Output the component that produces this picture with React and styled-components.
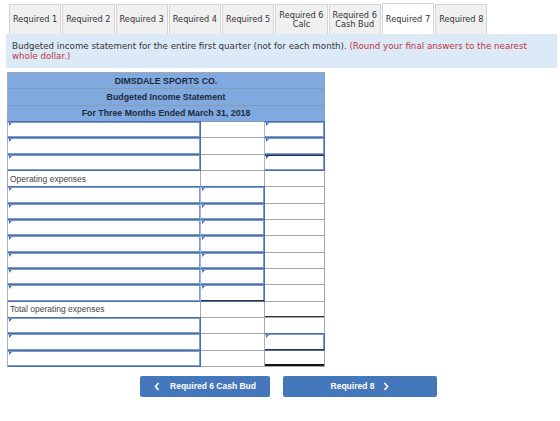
import React from "react";
import styled, { createGlobalStyle } from "styled-components";

const tabs = [
  ["Required 1"],
  ["Required 2"],
  ["Required 3"],
  ["Required 4"],
  ["Required 5"],
  ["Required 6", "Calc"],
  ["Required 6", "Cash Bud"],
  ["Required 7"],
  ["Required 8"],
];
const ACTIVE_TAB = 7;

// each row: [col1, col2, col3]; a cell is "in" (entry box), "" (blank) or a label
const rows = [
  { cells: ["in", "", "in"] },
  { cells: ["in", "", "in"] },
  { cells: ["in", "", "in"], rules: [null, null, "top"] },
  { cells: ["Operating expenses", "", ""] },
  { cells: ["in", "in", ""] },
  { cells: ["in", "in", ""] },
  { cells: ["in", "in", ""] },
  { cells: ["in", "in", ""] },
  { cells: ["in", "in", ""] },
  { cells: ["in", "in", ""] },
  { cells: ["in", "in", ""], rules: [null, "bottom", null] },
  { cells: ["Total operating expenses", "", ""], rules: [null, null, "bottom"] },
  { cells: ["in", "", ""] },
  { cells: ["in", "", "in"], rules: [null, null, "bottom"] },
  { cells: ["in", "", ""], rules: [null, null, "double"] },
];

const GlobalStyle = createGlobalStyle`
  body {
    margin: 0;
    background: #fff;
    font-family: "DejaVu Sans", Verdana, sans-serif;
  }
`;

const Page = styled.div`
  width: 560px;
  height: 421px;
  padding: 3px 3px 0 6px;
  box-sizing: border-box;
`;

const TabBar = styled.div`
  display: flex;
  align-items: flex-end;
  height: 31px;
  padding-left: 3px;
`;

const Tab = styled.div`
  display: flex;
  flex-direction: column;
  justify-content: center;
  align-items: center;
  box-sizing: border-box;
  height: ${p => (p.active ? "31px" : "30px")};
  padding: 0 3px;
  margin-right: 1px;
  background: ${p => (p.active ? "#fff" : "#f0f0f0")};
  border: 1px solid #d4d4d4;
  border-bottom: none;
  color: #333;
  font-size: 8.2px;
  line-height: 9px;
  white-space: nowrap;
  text-align: center;
`;

const Notice = styled.p`
  margin: 0;
  background: #dceaf8;
  padding: 7px 6px 5px;
  height: 34px;
  box-sizing: border-box;
  font-size: 8.7px;
  line-height: 10px;
  color: #333;
`;

const Hint = styled.span`
  color: #c0343c;
`;

const Sheet = styled.div`
  display: grid;
  grid-template-columns: 193px 64px 60px;
  grid-auto-rows: 16.33px;
  width: 317px;
  margin: 4px 0 0 1px;
  border-left: 1px solid #a6a6a6;
  border-top: 1px solid #a6a6a6;
  font-family: "Liberation Sans", Arial, sans-serif;
`;

const Banner = styled.div`
  grid-column: 1 / -1;
  display: flex;
  align-items: center;
  justify-content: center;
  background: #80a9e0;
  border-right: 1px solid #8a9ab0;
  border-bottom: 1px solid #8a9ab0;
  color: #1d2a3c;
  font-size: 8.8px;
  font-weight: bold;
`;

const ruleShadow = {
  top: "inset 0 1px 0 #1e2f4f",
  bottom: "inset 0 -1px 0 #333",
  double: "inset 0 -2px 0 #111",
};

const Cell = styled.div`
  position: relative;
  display: flex;
  align-items: center;
  padding-left: 2px;
  border-right: 1px solid #a6a6a6;
  border-bottom: 1px solid #a6a6a6;
  background: #fff;
  color: #444;
  font-size: 8.5px;
  white-space: nowrap;
  box-shadow: ${p => (p.rule ? ruleShadow[p.rule] : "none")};
`;

// entry box: its blue frame sits over the grey grid lines of the cell
const Entry = styled.div`
  position: relative;
  background: #fff;

  &::after {
    content: "";
    position: absolute;
    top: -1px;
    left: -1px;
    right: 0;
    bottom: 0;
    border: 1px solid #4a6ea8;
    border-left-color: #9fb6dc;
    box-shadow: ${p => (p.rule ? ruleShadow[p.rule] + ", " : "")}
      inset 0 1px 0 #7d9bcc, inset -1px 0 0 #7d9bcc, inset 0 -1px 0 #7d9bcc;
  }

  &::before {
    content: "";
    position: absolute;
    left: 1px;
    top: 1px;
    z-index: 1;
    border-left: 3px solid #3d6ec4;
    border-bottom: 3px solid transparent;
  }
`;

const Nav = styled.div`
  display: flex;
  gap: 13px;
  margin: 9px 0 0 134px;
`;

const NavButton = styled.button`
  display: flex;
  align-items: center;
  justify-content: center;
  gap: ${p => (p.gap ? p.gap : "10px")};
  width: ${p => p.width};
  height: 21px;
  border: none;
  border-radius: 2px;
  background: #4577bb;
  color: #fff;
  font-family: "Liberation Sans", Arial, sans-serif;
  font-size: 8.5px;
  font-weight: bold;
  cursor: pointer;
`;

const Chevron = ({ dir }) => (
  <svg width="6" height="9" viewBox="0 0 6 9">
    <path
      d={dir === "left" ? "M4.5 1 L1.5 4.5 L4.5 8" : "M1.5 1 L4.5 4.5 L1.5 8"}
      fill="none"
      stroke="#fff"
      strokeWidth="1.6"
    />
  </svg>
);

const App = () => (
  <Page>
    <GlobalStyle />
    <TabBar>
      {tabs.map((lines, i) => (
        <Tab key={i} active={i === ACTIVE_TAB}>
          {lines.map(l => (
            <span key={l}>{l}</span>
          ))}
        </Tab>
      ))}
    </TabBar>
    <Notice>
      Budgeted income statement for the entire first quarter (not for each
      month). <Hint>(Round your final answers to the nearest whole dollar.)</Hint>
    </Notice>
    <Sheet>
      <Banner>DIMSDALE SPORTS CO.</Banner>
      <Banner>Budgeted Income Statement</Banner>
      <Banner>For Three Months Ended March 31, 2018</Banner>
      {rows.map((row, r) =>
        row.cells.map((c, i) => {
          const rule = row.rules ? row.rules[i] : null;
          return c === "in" ? (
            <Entry key={r + "-" + i} rule={rule} />
          ) : (
            <Cell key={r + "-" + i} rule={rule}>
              {c}
            </Cell>
          );
        })
      )}
    </Sheet>
    <Nav>
      <NavButton width="130px">
        <Chevron dir="left" />
        Required 6 Cash Bud
      </NavButton>
      <NavButton width="154px" gap="9px">
        Required 8
        <Chevron dir="right" />
      </NavButton>
    </Nav>
  </Page>
);

export default App;
